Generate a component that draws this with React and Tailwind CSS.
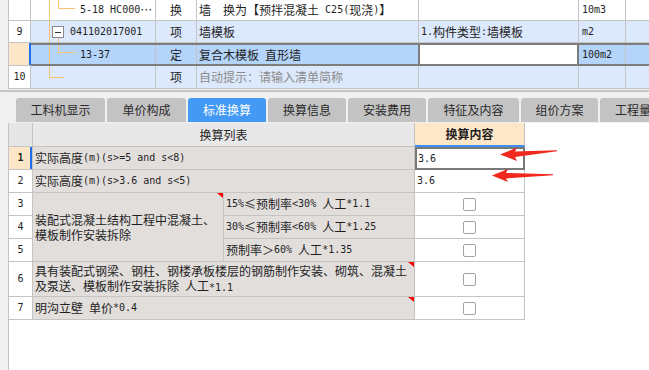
import React from 'react';

const bd = 'border-[#c4c4c4]';
const descBg = 'bg-[#e2dedc]';

// ascii runs in a narrow mono face, the rest in the CJK face
function T({ s }) {
  return s
    .split(/([\x20-\x7e]+)/)
    .filter(Boolean)
    .map((p, i) =>
      /^[\x20-\x7e]+$/.test(p) ? (
        <span key={i} className="font-['DejaVu_Sans_Mono',monospace] text-[10px] whitespace-pre">
          {p}
        </span>
      ) : (
        <span key={i}>{p}</span>
      )
    );
}

const Line = ({ className }) => <span className={`absolute bg-[#f8c474] ${className}`} />;

const Tri = () => (
  <span className="absolute top-0 right-0 w-[6px] h-[5px] bg-[#ff0000] [clip-path:polygon(0_0,100%_0,100%_100%)]" />
);

const Check = () => <span className="w-[13px] h-[13px] rounded-[2px] border border-[#a3a3a3] bg-white" />;

const tabs = [
  { label: '工料机显示', w: 'w-[89px]' },
  { label: '单价构成', w: 'w-[79px]' },
  { label: '标准换算', w: 'w-[78px]', active: true },
  { label: '换算信息', w: 'w-[78px]' },
  { label: '安装费用', w: 'w-[78px]' },
  { label: '特征及内容', w: 'w-[91px]' },
  { label: '组价方案', w: 'w-[77px]' },
  { label: '工程量清单', w: 'w-[90px]' },
];

function TopGrid() {
  return (
    <div className={`ml-2 h-[89px] shrink-0 border-l ${bd} bg-white flex flex-col overflow-hidden whitespace-nowrap`}>
      {/* 5-18 */}
      <div className={`flex h-[21px] shrink-0 border-b ${bd}`}>
        <div className={`w-[22px] shrink-0 border-r ${bd}`} />
        <div className={`w-[125px] shrink-0 border-r ${bd} relative flex items-center pl-[49px]`}>
          <Line className="left-[18px] top-0 bottom-0 w-px" />
          <Line className="left-[27px] top-0 h-[9px] w-px" />
          <Line className="left-[27px] top-[8px] h-px w-[17px]" />
          <T s="5-18 HC000…" />
        </div>
        <div className={`w-[41px] shrink-0 border-r ${bd} flex items-center justify-center`}>换</div>
        <div className={`w-[222px] shrink-0 border-r ${bd} flex items-center pl-[2px]`}>
          <T s="墙  换为【预拌混凝土 C25(现浇)】" />
        </div>
        <div className={`w-[160px] shrink-0 border-r ${bd}`} />
        <div className={`w-[47px] shrink-0 border-r ${bd} flex items-center pl-[3px]`}>
          <T s="10m3" />
        </div>
        <div className="flex-1" />
      </div>

      {/* 9 */}
      <div className={`flex h-[22px] shrink-0 border-b ${bd} bg-[#dce8fb]`}>
        <div className={`w-[22px] shrink-0 border-r ${bd} bg-white flex items-center justify-center`}>
          <T s="9" />
        </div>
        <div className={`w-[125px] shrink-0 border-r ${bd} relative flex items-center pl-[39px]`}>
          <Line className="left-[18px] top-0 bottom-0 w-px" />
          <span className="absolute left-[21px] top-[5px] w-[12px] h-[12px] border border-[#8a8a8a] bg-white flex items-center justify-center">
            <span className="w-[6px] h-px bg-[#333]" />
          </span>
          <Line className="left-[27px] top-[17px] bottom-0 w-px" />
          <T s="041102017001" />
        </div>
        <div className={`w-[41px] shrink-0 border-r ${bd} flex items-center justify-center`}>项</div>
        <div className={`w-[222px] shrink-0 border-r ${bd} flex items-center pl-[2px]`}>墙模板</div>
        <div className={`w-[160px] shrink-0 border-r ${bd} flex items-center pl-[2px]`}>
          <T s="1.构件类型:墙模板" />
        </div>
        <div className={`w-[47px] shrink-0 border-r ${bd} flex items-center pl-[3px]`}>
          <T s="m2" />
        </div>
        <div className="flex-1" />
      </div>

      {/* 13-37 selected */}
      <div className="flex h-[23px] shrink-0">
        <div className={`w-[22px] shrink-0 border-b ${bd} bg-[#fde6c8] relative`}>
          <span className="absolute right-0 top-0 bottom-0 w-[2px] bg-[#1c6fe6]" />
        </div>
        <div className="flex flex-1 border-y-2 border-[#7d7d7d] bg-[#b4d4fa]">
          <div className={`w-[125px] shrink-0 border-r ${bd} relative flex items-center pl-[49px]`}>
            <Line className="left-[18px] top-0 bottom-0 w-px" />
            <Line className="left-[27px] top-0 h-[7px] w-px" />
            <Line className="left-[27px] top-[7px] h-px w-[18px]" />
            <T s="13-37" />
          </div>
          <div className={`w-[41px] shrink-0 border-r ${bd} flex items-center justify-center`}>定</div>
          <div className="w-[221px] shrink-0 flex items-center pl-[2px]">
            <T s="复合木模板 直形墙" />
          </div>
          <div className="w-[161px] shrink-0 border-x-2 border-[#7d7d7d] bg-white" />
          <div className={`w-[47px] shrink-0 border-r ${bd} flex items-center pl-[3px]`}>
            <T s="100m2" />
          </div>
          <div className="flex-1" />
        </div>
      </div>

      {/* 10 */}
      <div className={`flex h-[23px] shrink-0 border-b ${bd} bg-[#dce8fb]`}>
        <div className={`w-[22px] shrink-0 border-r ${bd} bg-white flex items-center justify-center`}>
          <T s="10" />
        </div>
        <div className={`w-[125px] shrink-0 border-r ${bd} relative`}>
          <Line className="left-[18px] top-0 h-[12px] w-px" />
          <Line className="left-[18px] top-[11px] h-px w-[15px]" />
        </div>
        <div className={`w-[41px] shrink-0 border-r ${bd} flex items-center justify-center`}>项</div>
        <div className={`w-[222px] shrink-0 border-r ${bd} flex items-center pl-[2px] text-[#8c8c8c]`}>
          自动提示：请输入清单简称
        </div>
        <div className={`w-[160px] shrink-0 border-r ${bd}`} />
        <div className={`w-[47px] shrink-0 border-r ${bd}`} />
        <div className="flex-1" />
      </div>
    </div>
  );
}

function LowerTable() {
  const num = `w-[24px] shrink-0 border-r border-b ${bd} bg-white flex items-center justify-center`;
  const val = `w-[110px] shrink-0 border-r border-b ${bd} bg-white flex items-center`;
  const desc = `w-[382px] shrink-0 border-r border-b ${bd} ${descBg} flex items-center pl-[2px] relative`;
  return (
    <div className={`mt-[1px] ml-2 flex-1 border-l ${bd} bg-white`}>
      <div className="w-[516px] flex flex-col whitespace-nowrap">
        {/* header */}
        <div className="flex h-[24px]">
          <div className={`w-[24px] shrink-0 border-r border-b ${bd} bg-[#e6e6e6]`} />
          <div className={`w-[382px] shrink-0 border-r border-b ${bd} bg-[#e8e8e8] flex items-center justify-center`}>
            换算列表
          </div>
          <div className={`w-[110px] shrink-0 border-r ${bd} border-b-2 border-b-[#3d8ff0] bg-[#fde7c8] flex items-center justify-center font-bold`}>
            换算内容
          </div>
        </div>

        {/* 1 */}
        <div className="flex h-[23px]">
          <div className={`w-[24px] shrink-0 border-r border-b ${bd} bg-[#fde6c8] relative flex items-center justify-center font-bold`}>
            <T s="1" />
            <span className="absolute right-0 top-0 bottom-0 w-[2px] bg-[#1c6fe6]" />
          </div>
          <div className={desc}>
            <T s="实际高度(m)(s>=5 and s<8)" />
          </div>
          <div className="w-[110px] shrink-0 border-2 border-[#787878] bg-white flex items-center pl-[1px]">
            <T s="3.6" />
          </div>
        </div>

        {/* 2 */}
        <div className="flex h-[23px]">
          <div className={num}>
            <T s="2" />
          </div>
          <div className={desc}>
            <T s="实际高度(m)(s>3.6 and s<5)" />
          </div>
          <div className={`${val} pl-[2px]`}>
            <T s="3.6" />
          </div>
        </div>

        {/* 3 - 5 */}
        <div className="flex">
          <div className="w-[24px] shrink-0 flex flex-col">
            {['3', '4', '5'].map((n) => (
              <div key={n} className={`h-[23px] border-r border-b ${bd} flex items-center justify-center`}>
                <T s={n} />
              </div>
            ))}
          </div>
          <div className={`w-[191px] shrink-0 border-r border-b ${bd} ${descBg} relative flex items-center pl-[2px]`}>
            <Tri />
            <div className="leading-[15px]">
              装配式混凝土结构工程中混凝土、
              <br />
              模板制作安装拆除
            </div>
          </div>
          <div className="w-[191px] shrink-0 flex flex-col">
            {['15%≤预制率<30% 人工*1.1', '30%≤预制率<60% 人工*1.25', '预制率＞60% 人工*1.35'].map((t) => (
              <div key={t} className={`h-[23px] border-r border-b ${bd} ${descBg} flex items-center pl-[2px]`}>
                <T s={t} />
              </div>
            ))}
          </div>
          <div className="w-[110px] shrink-0 flex flex-col">
            {[0, 1, 2].map((i) => (
              <div key={i} className={`h-[23px] border-r border-b ${bd} flex items-center justify-center`}>
                <Check />
              </div>
            ))}
          </div>
        </div>

        {/* 6 */}
        <div className="flex h-[35px]">
          <div className={num}>
            <T s="6" />
          </div>
          <div className={desc}>
            <Tri />
            <div className="leading-[15px]">
              具有装配式钢梁、钢柱、钢楼承板楼层的钢筋制作安装、砌筑、混凝土
              <br />
              <T s="及泵送、模板制作安装拆除 人工*1.1" />
            </div>
          </div>
          <div className={`${val} justify-center`}>
            <Check />
          </div>
        </div>

        {/* 7 */}
        <div className="flex h-[23px]">
          <div className={num}>
            <T s="7" />
          </div>
          <div className={desc}>
            <Tri />
            <T s="明沟立壁 单价*0.4" />
          </div>
          <div className={`${val} justify-center`}>
            <Check />
          </div>
        </div>
      </div>
    </div>
  );
}

export default function App() {
  return (
    <div className="relative w-[649px] h-[370px] overflow-hidden bg-[#f0f0f0] text-[12px] leading-[14px] text-[#1f1f1f] font-['Noto_Sans_CJK_SC',sans-serif] flex flex-col">
      <TopGrid />

      {/* separator */}
      <div className="mt-[1px] h-[2px] shrink-0 bg-[#c6c6c6]" />

      {/* tabs */}
      <div className="mt-[6px] h-[24px] shrink-0 flex gap-[2px] pl-[16px] whitespace-nowrap">
        {tabs.map((t) => (
          <div
            key={t.label}
            className={`${t.w} shrink-0 rounded-t-[3px] flex items-center justify-center ${
              t.active ? 'bg-[#4499f4] text-white' : 'bg-[#c3c3c3] text-[#2a2a2a]'
            }`}
          >
            {t.label}
          </div>
        ))}
      </div>

      <LowerTable />

      {/* red annotation arrows */}
      <svg className="absolute inset-0 pointer-events-none" width="649" height="370" viewBox="0 0 649 370">
        <polygon points="500,154.5 517,147.5 515,151.5 557,150.3 557,151.3 515,157 517,161" fill="#f0281e" />
        <polygon points="492,175.5 508,169 506,173 553,174.3 553,175.3 506,178.5 508,182" fill="#f0281e" />
      </svg>
    </div>
  );
}
